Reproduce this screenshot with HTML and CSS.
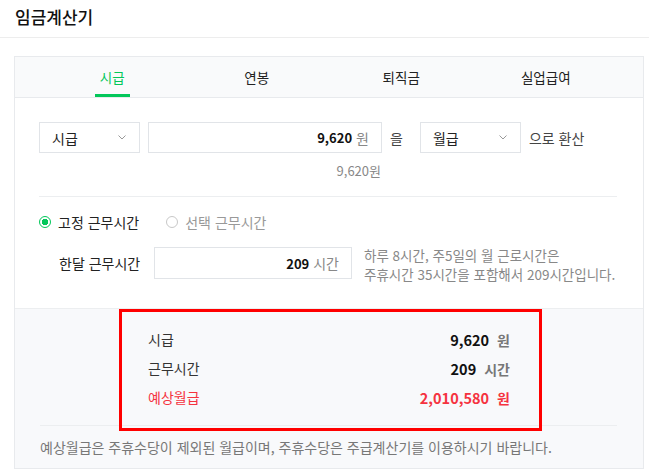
FILE: index.html
```html
<!DOCTYPE html>
<html lang="ko">
<head>
    <meta charset="UTF-8">
    <meta name="viewport" content="width=device-width, initial-scale=1.0">
    <title>임금계산기</title>
    <link rel="stylesheet" href="styles.css">
</head>
<body>

    <div class="header">
        <h1>임금계산기</h1>
    </div>

    <div class="calc">
        <ul class="tabs">
            <li class="on"><span>시급</span></li>
            <li><span>연봉</span></li>
            <li><span>퇴직금</span></li>
            <li><span>실업급여</span></li>
        </ul>

        <div class="form">
            <div class="convert">
                <div class="select">
                    <span>시급</span>
                    <svg width="8" height="5" viewBox="0 0 8 5"><polyline points="0.5,0.5 4,4 7.5,0.5" fill="none" stroke="#999" stroke-width="1"/></svg>
                </div>
                <div class="input money"><b>9,620</b><em>원</em></div>
                <span class="word josa">을</span>
                <div class="select">
                    <span>월급</span>
                    <svg width="8" height="5" viewBox="0 0 8 5"><polyline points="0.5,0.5 4,4 7.5,0.5" fill="none" stroke="#999" stroke-width="1"/></svg>
                </div>
                <span class="word">으로 환산</span>
            </div>
            <p class="hint">9,620원</p>

            <div class="line"></div>

            <div class="radios">
                <label class="radio checked"><i></i>고정 근무시간</label>
                <label class="radio"><i></i>선택 근무시간</label>
            </div>

            <div class="hours">
                <span class="label">한달 근무시간</span>
                <div class="input time"><b>209</b><em>시간</em></div>
                <p class="help">하루 8시간, 주5일의 월 근로시간은<br>주휴시간 35시간을 포함해서 209시간입니다.</p>
            </div>
        </div>

        <div class="result">
            <ul class="rows">
                <li><span>시급</span><strong><b>9,620</b><em>원</em></strong></li>
                <li><span>근무시간</span><strong><b>209</b><em>시간</em></strong></li>
                <li class="total"><span>예상월급</span><strong><b>2,010,580</b><em>원</em></strong></li>
            </ul>
            <div class="line bottom"></div>
            <p class="notice">예상월급은 주휴수당이 제외된 월급이며, 주휴수당은 주급계산기를 이용하시기 바랍니다.</p>
            <div class="mark"></div>
        </div>
    </div>

</body>
</html>
```

FILE: styles.css
```css
body { margin: 0; background: #fff; color: #222; font-family: "Noto Sans CJK KR", "Noto Sans", sans-serif; font-size: 14px; }
p { margin: 0; }

.header { padding: 6px 15px 9px; border-bottom: 1px solid #ededed; }
.header h1 { margin: 0; font-size: 17px; line-height: 22px; font-weight: 500; color: #111; }

.calc { width: 630px; box-sizing: border-box; margin: 18px 0 0 14px; border: 1px solid #e8eaed; }

.tabs { display: flex; margin: 0; padding: 0 25px; list-style: none; background: #f9fafb; border-bottom: 1px solid #e8eaed; font-size: 13.5px; }
.tabs li { flex: 1; text-align: center; }
.tabs span { display: inline-block; height: 40px; box-sizing: border-box; padding: 3px 5px 0; line-height: 35px; border-bottom: 2px solid transparent; color: #222; }
.tabs .on span { color: #03c75a; border-bottom: 3px solid #03c75a; }

.form { padding: 24px 26px 24px 24px; }
.convert { display: flex; align-items: center; gap: 8px; }
.select { width: 101px; height: 31px; box-sizing: border-box; border: 1px solid #e1e4e8; display: flex; align-items: center; justify-content: space-between; padding: 0 13px 0 12px; }
.select svg { display: block; }
.input { height: 31px; box-sizing: border-box; border: 1px solid #e1e4e8; display: flex; align-items: center; justify-content: flex-end; padding: 0 12px; }
.input b { font-size: 13px; font-weight: 700; color: #111; }
.input em { font-style: normal; color: #888; margin-left: 4px; }
.money { width: 234px; }
.word { color: #444; }
.josa { margin-right: 9px; }
.hint { width: 342px; margin-top: 9px; text-align: right; color: #888; font-size: 13px; line-height: 18px; }

.line { height: 1px; background: #eceef0; margin-top: 16px; }

.radios { display: flex; gap: 27px; margin-top: 16px; line-height: 18px; }
.radio { display: flex; align-items: center; gap: 7px; color: #999; }
.radio i { width: 12px; height: 12px; box-sizing: border-box; border: 1px solid #c8c8c8; border-radius: 50%; }
.radio.checked { color: #222; }
.radio.checked i { border: 1.5px solid #03c75a; background: radial-gradient(circle, #03c75a 0 3px, #fff 3.5px); }

.hours { display: flex; align-items: flex-start; margin-top: 16px; padding-left: 20px; }
.hours .label { line-height: 32px; width: 95px; }
.time { width: 198px; height: 32px; }
.help { margin: -1px 0 0 12px; color: #888; font-size: 13.5px; line-height: 19px; }

.result { position: relative; background: #f8f9fb; border-top: 1px solid #eceef0; }
.rows { width: 362px; margin: 0 auto; padding: 20px 0 0; list-style: none; }
.rows li { display: flex; justify-content: space-between; align-items: center; height: 20px; margin-bottom: 9px; color: #333; }
.rows li:last-child { margin-bottom: 0; }
.rows b { font-size: 14.5px; font-weight: 700; color: #111; }
.rows em { font-style: normal; color: #777; margin-left: 8px; }
.rows .total span, .rows .total b, .rows .total em { color: #f5333f; }
.line.bottom { margin: 18px 26px 0 25px; }
.notice { padding: 12px 25px 12px; color: #777; line-height: 18px; }
.mark { position: absolute; top: 0; left: 104px; width: 423px; height: 122px; box-sizing: border-box; border: 3px solid #ff0000; pointer-events: none; }
```
